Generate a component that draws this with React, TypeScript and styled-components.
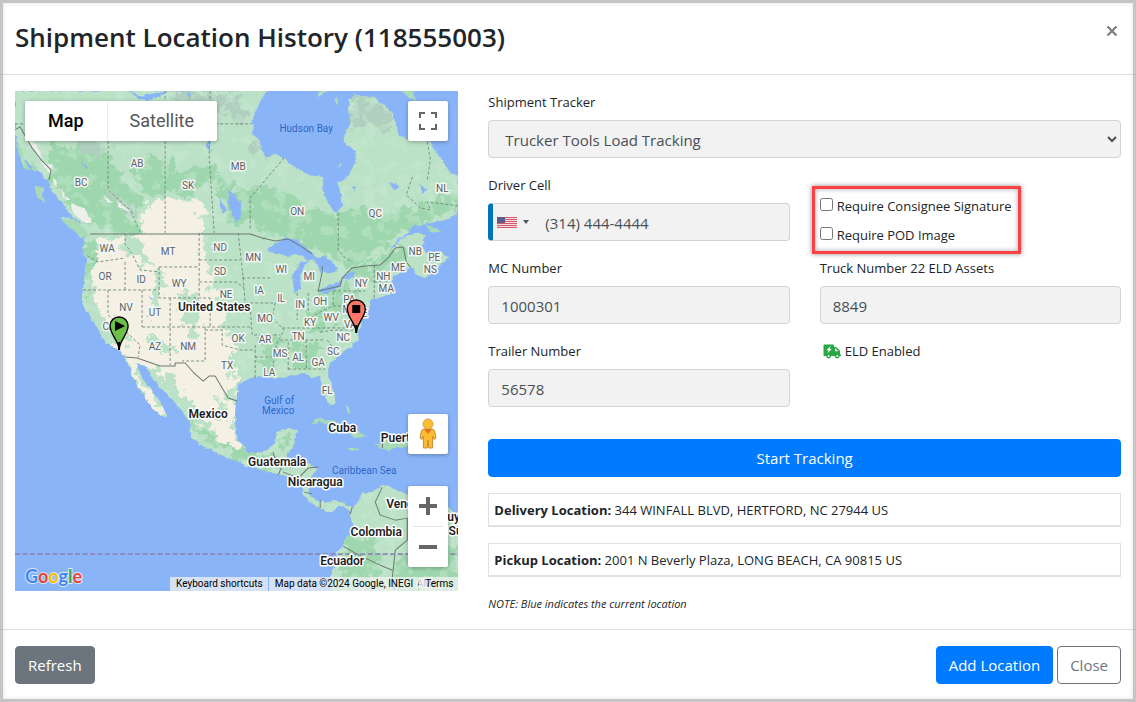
import React from "react";
import styled, { createGlobalStyle, css } from "styled-components";

const GlobalStyle = createGlobalStyle`
  *, *::before, *::after { box-sizing: border-box; }
  body {
    margin: 0;
    background: #fff;
    color: #212529;
    font-family: "Open Sans", "Noto Sans", sans-serif;
    font-size: 13px;
    line-height: 21px;
  }
  button, input, select { font-family: inherit; margin: 0; }
`;

const Dialog = styled.main`
  position: relative;
  min-height: 100vh;
  background: #fff;
  &::after {
    content: "";
    position: absolute;
    inset: 0;
    border: 3px solid rgba(140, 140, 140, 0.5);
    box-shadow: inset 0 0 5px rgba(0, 0, 0, 0.12);
    pointer-events: none;
  }
`;

const Header = styled.header`
  display: flex;
  justify-content: space-between;
  align-items: flex-start;
  padding: 16px 15px;
  border-bottom: 1px solid #dee2e6;
`;

const Title = styled.h1`
  margin: 0;
  font-size: 26px;
  line-height: 42px;
  font-weight: 600;
`;

const Dismiss = styled.button`
  display: flex;
  padding: 8px 0;
  border: 0;
  background: none;
  color: #7f7f7f;
  margin-right: 2px;
`;

const Body = styled.div`
  display: grid;
  grid-template-columns: 5fr 7fr;
  padding-top: 16px;
`;

const MapPane = styled.section`
  padding: 0 15px;
  min-width: 0;
`;

const MapFrame = styled.div`
  position: relative;
  height: 500px;
  overflow: hidden;
  background: #8ab4f8;
  font-family: Roboto, sans-serif;
`;

const MapArt = styled.svg`
  display: block;
  width: 100%;
  height: 100%;
`;

const MapLabel = styled.text<{ $kind: "state" | "country" | "water" }>`
  font-family: Roboto, sans-serif;
  text-anchor: middle;
  stroke-linejoin: round;
  paint-order: stroke;
  ${({ $kind }) =>
    $kind === "state"
      ? css`font-size: 10px; fill: #5b6065; stroke: #f3f7f3; stroke-width: 3px;`
      : $kind === "country"
        ? css`font-size: 12px; font-weight: 600; fill: #1c1d1f; stroke: #fff; stroke-width: 3px;`
        : css`font-size: 10px; fill: #2a68c8;`}
`;

const floating = css`
  border: 0;
  padding: 0;
  background: #fff;
  border-radius: 2px;
  box-shadow: 0 1px 4px rgba(0, 0, 0, 0.3);
`;

const TypeSwitch = styled.div`
  ${floating}
  position: absolute;
  top: 10px;
  left: 10px;
  display: flex;
  height: 40px;
`;

const TypeButton = styled.button<{ $active?: boolean }>`
  border: 0;
  box-shadow: ${({ $active }) => ($active ? "none" : "inset 1px 0 #ececec")};
  padding: 0 23px 2px;
  background: none;
  font-size: 18px;
  font-weight: ${({ $active }) => ($active ? 500 : 400)};
  color: ${({ $active }) => ($active ? "#000" : "#565656")};
`;

const ToolButton = styled.button<{ $top?: boolean }>`
  ${floating}
  position: absolute;
  right: 10px;
  ${({ $top }) => ($top ? "top: 10px;" : "bottom: 137px;")}
  display: grid;
  place-items: center;
  width: 40px;
  height: 40px;
`;

const ZoomStack = styled.div`
  ${floating}
  position: absolute;
  right: 10px;
  bottom: 24px;
  width: 40px;
`;

const ZoomButton = styled.button`
  display: grid;
  place-items: center;
  width: 40px;
  height: 40px;
  padding: 0;
  border: 0;
  background: none;
`;

const ZoomRule = styled.div`
  height: 1px;
  margin: 0 5px;
  background: #e6e6e6;
`;

const Logo = styled.a`
  position: absolute;
  left: 9px;
  bottom: 0;
  display: flex;
`;

const Credits = styled.div`
  position: absolute;
  right: 0;
  bottom: 0;
  display: flex;
  gap: 1px;
  font-size: 10px;
  line-height: 14px;
`;

const Credit = styled.a`
  padding: 0 5px 0 6px;
  background: rgba(245, 245, 245, 0.7);
  color: #000;
  text-decoration: none;
  white-space: nowrap;
`;

const Form = styled.form`
  display: grid;
  grid-template-columns: 1fr 1fr;
  column-gap: 30px;
  row-gap: 16px;
  align-content: start;
  padding: 0 15px;
  min-width: 0;
`;

const Field = styled.div<{ $wide?: boolean }>`
  min-width: 0;
  ${({ $wide }) => $wide && "grid-column: 1 / -1;"}
`;

const Label = styled.label`
  display: block;
  padding: 1px 0 7px;
`;

const control = css`
  width: 100%;
  height: 38px;
  border: 1px solid #ced4da;
  border-radius: 4px;
  background: #f2f2f2;
  color: #495057;
  font-size: 15px;
`;

const Input = styled.input`
  ${control}
  padding: 2px 12px 0;
`;

const Select = styled.select`
  ${control}
  padding: 2px 0 0 12px;
`;

const PhoneBox = styled.div`
  ${control}
  display: flex;
  border-left: 5px solid #0074bb;
`;

const CountryButton = styled.button`
  display: flex;
  align-items: center;
  gap: 6px;
  padding: 0 0 0 4px;
  border: 0;
  background: none;
`;

const PhoneInput = styled.input`
  flex: 1;
  min-width: 0;
  padding: 2px 12px 0 16px;
  border: 0;
  background: none;
  color: inherit;
  font-size: 15px;
`;

const Options = styled.fieldset`
  display: flex;
  flex-direction: column;
  gap: 8px;
  width: fit-content;
  height: 68px;
  margin: 12px 0 -16px -8px;
  padding: 7px 6px 7px 5px;
  border: 3px solid #fb4144;
  box-shadow: 0 0 5px rgba(0, 0, 0, 0.45), inset 0 0 5px rgba(0, 0, 0, 0.35);
`;

const Option = styled.label`
  display: flex;
  align-items: center;
  gap: 4px;
  white-space: nowrap;
  input { width: 13px; height: 13px; margin-bottom: 4px; }
`;

const Eld = styled.div`
  display: flex;
  align-items: center;
  gap: 4px;
  height: 22px;
  padding-left: 3px;
`;

const Button = styled.button<{ $tone: "primary" | "secondary" | "outline" }>`
  height: 38px;
  padding: 0 12px;
  border: 1px solid;
  border-radius: 4px;
  font-size: 15px;
  white-space: nowrap;
  ${({ $tone }) =>
    $tone === "primary"
      ? "background: #007bff; border-color: #007bff; color: #fff; font-weight: 500;"
      : $tone === "secondary"
        ? "background: #6c757d; border-color: #6c757d; color: #fff;"
        : "background: #fff; border-color: #6c757d; color: #6c757d;"}
`;

const StartButton = styled(Button)`
  grid-column: 1 / -1;
  margin-top: 16px;
`;

const Stop = styled.p`
  grid-column: 1 / -1;
  margin: 0;
  padding: 6px 5px 4px;
  border: 1px solid #dee2e6;
  border-bottom-width: 2px;
`;

const Note = styled.p`
  grid-column: 1 / -1;
  margin: 0;
  padding: 0 0 15px;
  font-size: 11px;
  font-style: italic;
`;

const Footer = styled.footer`
  display: flex;
  gap: 4px;
  padding: 16px 15px;
  border-top: 1px solid #dee2e6;
  > :first-child { margin-right: auto; }
`;

const LAND =
  "M15 91 L15 133 20 152 28 163 37 170 48 180 53 192 62 203 68 212 80 222 85 237 83 247 86 260 85 272 83 290 83 307 90 317 100 333 105 343 119 349 125 357 128 365 133 376 138 387 147 400 153 408 163 418 168 416 157 397 148 387 142 378 137 363 147 367 152 377 160 387 170 397 182 412 190 421 191 437 200 445 217 453 230 459 240 463 255 468 273 473 293 478 302 487 304 495 310 502 320 508 330 512 337 507 345 506 350 512 352 518 353 525 350 533 342 545 336 553 337 560 333 570 330 577 333 583 332 591 L458 591 458 517 448 507 430 498 408 495 393 488 382 485 372 492 362 493 358 502 352 508 345 502 333 500 325 503 313 498 308 492 310 480 317 468 307 463 290 467 287 453 292 448 297 430 288 429 277 433 273 445 263 452 247 452 238 440 235 425 235 410 237 393 238 385 250 378 263 377 280 378 290 375 302 373 312 378 318 375 322 383 325 397 330 406 335 402 334 390 328 377 328 367 337 357 350 347 358 340 359 332 362 320 367 313 370 300 378 298 390 293 388 287 393 277 403 270 412 266 416 275 425 277 437 268 448 257 440 252 430 256 422 248 425 235 415 232 402 238 394 247 390 249 400 238 413 227 430 223 445 220 458 212 L458 177 447 170 438 155 430 142 408 140 397 135 393 113 383 105 373 97 355 95 348 100 350 123 343 140 355 152 356 163 347 177 338 182 340 193 343 205 337 213 330 205 323 195 323 177 307 175 293 167 283 158 277 155 265 157 258 140 252 135 253 117 260 103 265 93 268 91Z";

const ISLANDS =
  "M60 217 L74 219 82 226 90 236 82 238 67 226Z M34 186 L42 189 45 204 37 196Z M15 143 L22 150 26 165 33 171 24 168Z M31 158 L37 172 33 171Z M310 423 L320 418 334 421 348 428 360 433 369 437 357 438 346 433 334 428 322 422Z M347 447 L354 447 359 450 349 450Z M373 446 L382 444 380 439 388 435 402 437 411 445 398 447 388 450Z M345 406 L348 409 350 414 346 411Z M425 225 L434 227 440 232 430 231Z M317 91 L328 91 318 98Z M337 97 L339 101 336 105 334 100Z M399 91 L413 91 416 101 408 96Z M340 163 L342 164 338 169Z";

const DRY =
  "M143 217 L150 207 168 199 180 203 197 205 204 215 200 233 206 242 198 255 212 275 208 290 215 300 222 315 223 335 234 345 226 362 232 385 222 395 236 412 228 425 236 440 245 448 232 446 215 430 202 418 196 405 183 392 176 380 165 372 150 364 137 357 130 370 143 388 155 405 166 416 153 408 142 393 128 364 118 345 115 330 104 315 97 300 92 280 95 262 97 248 106 238 118 243 126 256 137 258 134 245 141 235 150 233 148 224Z";

const PEAKS =
  "M184 290 L196 296 200 310 196 325 200 342 190 340 186 322 180 308Z M128 236 L140 240 146 256 156 262 150 268 138 264 130 250Z M158 268 L166 282 160 300 154 318 150 300Z M148 336 L166 344 176 352 168 354 154 346Z M112 316 L124 332 132 344 122 340Z M168 374 L180 388 194 408 204 424 214 432 200 428 186 410 174 394Z M214 392 L222 408 226 422 218 414Z";

const FOREST =
  "M48 140 L70 150 84 146 110 155 120 180 142 195 128 212 138 232 126 240 112 226 92 228 76 212 60 194 48 170Z M130 160 L160 156 180 174 210 164 224 184 200 180 190 200 176 188 150 196 136 180Z M216 185 L240 190 255 182 290 196 310 210 337 216 360 205 392 215 410 208 458 196 458 211 430 222 411 226 398 238 385 250 362 262 344 266 330 254 312 250 290 236 262 234 248 220 232 224Z M86 240 L97 244 95 270 86 285 87 306 84 300Z M318 300 L345 285 358 292 340 312 322 330 300 338 312 320Z M350 270 L382 258 400 244 406 262 388 276 370 285Z M264 335 L284 340 278 366 262 372Z M292 342 L318 345 320 365 298 370Z M170 372 L186 396 204 420 226 440 255 452 270 456 296 468 280 470 240 460 205 440 192 424Z M352 528 L368 534 380 560 372 591 338 591 342 550Z M396 560 L430 540 458 548 458 591 396 591Z M272 436 L292 434 288 450Z";

const TUNDRA =
  "M352 98 L375 101 390 110 392 128 380 130 366 124 354 128Z M70 134 L95 142 112 150 100 156 86 150Z M165 91 L215 91 238 100 248 116 240 126 225 112 200 106 176 102Z M252 138 L263 150 266 158 250 148Z M108 190 L122 200 136 214 132 218 118 206Z";

const LAKES =
  "M267 250 L276 243 287 238 297 240 308 249 318 259 307 260 296 254 286 256Z M300 262 L309 260 303 268 300 280 301 290 294 292 292 278Z M310 256 L323 257 333 262 337 270 327 275 322 268 320 275 316 264Z M317 292 L328 285 342 281 340 286 327 293Z M342 276 L355 272 353 278 342 280Z M228 190 L234 194 241 204 240 220 235 222 229 207Z M219 196 L226 210 224 214 219 205Z M130 91 L140 96 170 91 158 97 147 101 138 98Z M148 294 L153 299 150 299Z M79 158 L88 169 86 169Z M204 146 L210 140 211 152Z M388 182 L399 186 394 189Z M420 185 L428 190 422 193Z M350 188 L357 186 354 191Z M187 92 L192 96 188 98Z";

const SNOW =
  "M24 135 L33 142 40 150 42 162 34 152Z M52 178 L58 182 56 188Z M60 188 L70 200 66 200Z M70 204 L84 208 92 222 84 222 74 214Z M104 195 L112 202 108 203Z M116 200 L130 212 120 208Z M40 161 L52 166 50 174Z";

const BORDERS_DASHED =
  "M15 124 H252 M108 141 V190 L130 210 140 232 M165 91 V233 M210 91 L209 155 214 233 M284 158 L250 198 V230 M338 213 V250 L345 258 352 262 M199 233 V298 M159 267 H199 M159 267 V298 H210 M238 233 L241 260 243 278 245 303 M199 260 H240 M199 282 H236 L244 288 M125 233 V244 L132 254 140 270 159 272 M125 262 V290 M83 290 H159 M87 256 L98 262 125 258 M108 290 V315 L140 345 138 357 M142 290 V327 M170 298 V365 M142 327 H252 M205 327 V361 H182 M210 298 V327 M242 278 H270 M245 303 H275 M250 307 L252 335 H280 M288 342 V372 M306 340 V368 M288 369 H325 M282 328 H345 M280 340 H325 M297 293 V320 M308 293 V312 M333 292 V306 M333 291 H365 M333 306 H367 M320 332 L335 330 H358 M255 345 V378 M255 357 H272 M205 330 H222 V345 L240 350 H255 M275 303 L272 318 284 330 276 345 272 372 M306 320 L320 312 333 306 M327 340 L338 355 M374 265 V298 M374 282 H388 M412 177 L406 195 420 208 430 210 427 202 458 206 M427 142 L430 160 427 180";

const BORDERS_SOLID =
  "M90 234 H250 L262 238 275 241 288 239 300 246 312 254 M322 266 L322 272 318 291 340 286 342 278 352 268 365 266 380 265 388 258 395 248 403 247 406 262 410 267 M125 357 L137 358 160 366 H175 V363 H185 L193 372 203 381 209 376 H215 L222 388 228 398 237 401 M15 130 L20 127 32 148 42 161 51 170 49 180 M382 487 L375 502 380 515 395 520 407 518 V540 L395 550 392 578 394 591 M343 546 L355 553 365 558 380 565 392 570 M273 452 L275 460 283 463 278 475 M283 472 L298 478 308 468 318 467 M320 500 V508 M304 492 L312 494 M352 507 L350 514 M383 437 L382 448";

const STATES: [string, number, number][] = [
  ["AB", 137, 163], ["BC", 81, 182], ["SK", 188, 185], ["MB", 238, 166], ["ON", 297, 211],
  ["QC", 375, 213], ["NL", 442, 188], ["WA", 107, 248], ["MT", 168, 251], ["ND", 220, 247],
  ["MN", 253, 257], ["NB", 415, 251], ["PE", 434, 257], ["NS", 430, 269], ["OR", 105, 276],
  ["ID", 141, 279], ["WY", 179, 283], ["SD", 220, 271], ["NE", 226, 294], ["NV", 126, 307],
  ["UT", 155, 312], ["CA", 109, 326], ["AZ", 155, 346], ["NM", 188, 346], ["OK", 238, 338],
  ["TX", 227, 365], ["WI", 281, 269], ["MI", 309, 276], ["IA", 259, 290], ["IL", 281, 298],
  ["IN", 300, 304], ["OH", 320, 301], ["NY", 361, 283], ["NH", 383, 276], ["ME", 398, 267],
  ["MA", 386, 288], ["PA", 349, 299], ["MD", 350, 309], ["DE", 361, 313], ["MO", 265, 318],
  ["KY", 310, 322], ["WV", 331, 317], ["VA", 350, 324], ["AR", 265, 339], ["TN", 298, 336],
  ["NC", 343, 337], ["MS", 280, 353], ["AL", 298, 357], ["SC", 333, 351], ["GA", 318, 362],
  ["LA", 269, 372], ["FL", 327, 390], ["AM", 424, 583],
];

const COUNTRIES: [string, number, number][] = [
  ["United States", 214, 307], ["Mexico", 208, 414], ["Cuba", 342, 428], ["Puerto Rico", 412, 438],
  ["Guatemala", 277, 462], ["Nicaragua", 315, 482], ["Venezuela", 414, 504], ["Colombia", 376, 532],
  ["Ecuador", 342, 561], ["Guyana", 459, 517], ["Suriname", 474, 531],
];

const WATERS: [string, number, number][] = [
  ["Hudson Bay", 306, 128], ["Gulf of", 279, 400], ["Mexico", 278, 410], ["Caribbean Sea", 364, 470],
];

function Pin({ x, y, fill, children }: { x: number; y: number; fill: string; children: React.ReactNode }) {
  return (
    <g transform={`translate(${x} ${y})`}>
      <path
        d="M0 -1 C-1 -10 -9 -16 -9 -24 A9 9 0 0 1 9 -24 C9 -16 1 -10 0 -1Z"
        fill={fill}
        stroke="#000"
        strokeWidth="1.4"
      />
      <path d="M0 0 V-8" stroke="#000" strokeWidth="2" />
      {children}
    </g>
  );
}

function ContinentMap() {
  return (
    <MapArt viewBox="15 91 443 500" preserveAspectRatio="xMidYMid slice" role="img" aria-label="Map of North America">
      <defs>
        <clipPath id="land"><path d={LAND} /><path d={ISLANDS} /></clipPath>
        <filter id="rough" x="0" y="0" width="100%" height="100%">
          <feTurbulence type="fractalNoise" baseFrequency="0.14" numOctaves="3" seed="4" result="n" />
          <feDisplacementMap in="SourceGraphic" in2="n" scale="5" xChannelSelector="R" yChannelSelector="G" />
        </filter>
        <filter id="patchy" x="0" y="0" width="100%" height="100%">
          <feTurbulence type="fractalNoise" baseFrequency="0.09" numOctaves="4" seed="11" result="n" />
          <feDisplacementMap in="SourceGraphic" in2="n" scale="26" xChannelSelector="R" yChannelSelector="G" />
        </filter>
        <filter id="speckle" x="0" y="0" width="100%" height="100%">
          <feTurbulence type="fractalNoise" baseFrequency="0.08" numOctaves="4" seed="7" />
          <feColorMatrix values="0 0 0 0 0.58  0 0 0 0 0.83  0 0 0 0 0.66  14 0 0 0 -7.7" />
        </filter>
      </defs>
      <g filter="url(#rough)">
        <path d={LAND} fill="#bbe2c6" />
        <path d={ISLANDS} fill="#a8dab5" />
        <g clipPath="url(#land)">
          <path d={FOREST} fill="#94d2a5" opacity="0.75" filter="url(#patchy)" />
          <path d={TUNDRA} fill="#b1cfbe" filter="url(#patchy)" />
          <rect x="15" y="91" width="443" height="500" filter="url(#speckle)" opacity="0.4" />
          <path d={DRY} fill="#f5f0e4" stroke="#f5f0e4" strokeWidth="5" filter="url(#patchy)" />
          <path d={PEAKS} fill="#bbe2c6" filter="url(#patchy)" />
        </g>
        <path d={SNOW} fill="#eef0ee" />
        <path d={LAKES} fill="#8ab4f8" />
      </g>
      <path d={BORDERS_DASHED} fill="none" stroke="#6f8a7b" strokeWidth="0.9" strokeDasharray="3 2" />
      <path d={BORDERS_SOLID} fill="none" stroke="#6c7a72" strokeWidth="1" strokeLinejoin="round" />
      <path d="M15 554 H458" stroke="#8c87b4" strokeWidth="1.6" strokeDasharray="5 2.5" />
      {STATES.map(([t, x, y]) => (
        <MapLabel key={t} $kind="state" x={x} y={y + 4}>{t}</MapLabel>
      ))}
      {WATERS.map(([t, x, y]) => (
        <MapLabel key={t + y} $kind="water" x={x} y={y + 4}>{t}</MapLabel>
      ))}
      {COUNTRIES.map(([t, x, y]) => (
        <MapLabel key={t} $kind="country" x={x} y={y + 4}>{t}</MapLabel>
      ))}
      <Pin x={119} y={350} fill="#6cc04a"><path d="M-4 -29 L6 -24 L-4 -19Z" fill="#000" /></Pin>
      <Pin x={356} y={333} fill="#fd7567"><rect x="-4" y="-28" width="8" height="8" fill="#000" /></Pin>
    </MapArt>
  );
}

const LOGO_LETTERS: [string, string][] = [
  ["G", "#4285f4"], ["o", "#ea4335"], ["o", "#fbbc04"], ["g", "#4285f4"], ["l", "#34a853"], ["e", "#ea4335"],
];

function Flag() {
  return (
    <svg width="20" height="11" viewBox="0 0 20 11" opacity="0.75">
      <rect width="20" height="11" fill="#f3d5da" />
      {[0, 2, 4, 6, 8, 10].map((y) => <rect key={y} y={y} width="20" height="1" fill="#c8283f" />)}
      <rect width="8" height="6" fill="#2d2c66" />
    </svg>
  );
}

function EldTruck() {
  return (
    <svg width="18" height="15" viewBox="0 0 18 15">
      <path
        d="M1.5 0.5 H10 A1 1 0 0 1 11 1.5 V3 H13.2 L17 6.8 V10.6 H18 V12 H16.6 A2.4 2.4 0 0 1 11.8 12 H8 A2.4 2.4 0 0 1 3.2 12 H1.5 A1 1 0 0 1 0.5 11 V1.5 A1 1 0 0 1 1.5 0.5Z"
        fill="#28a745"
      />
      <path d="M12 4.5 H12.8 L15.4 7.2 H12Z" fill="#fff" />
      <path d="M7.6 2 L3.4 6.2 H5.6 L4.4 9.2 L8.8 5 H6.6Z" fill="#fff" />
      <circle cx="5.6" cy="12" r="1.9" fill="#28a745" /><circle cx="5.6" cy="12" r="1" fill="#fff" />
      <circle cx="14.2" cy="12" r="1.9" fill="#28a745" /><circle cx="14.2" cy="12" r="1" fill="#fff" />
    </svg>
  );
}

export default function App() {
  return (
    <>
      <GlobalStyle />
      <Dialog>
        <Header>
          <Title>Shipment Location History (118555003)</Title>
          <Dismiss aria-label="Close dialog">
            <svg width="14" height="14" viewBox="0 0 14 14">
              <path d="M2.5 2.5 L11.5 11.5 M11.5 2.5 L2.5 11.5" stroke="currentColor" strokeWidth="2.2" />
            </svg>
          </Dismiss>
        </Header>
        <Body>
          <MapPane>
            <MapFrame>
              <ContinentMap />
              <TypeSwitch>
                <TypeButton $active>Map</TypeButton>
                <TypeButton>Satellite</TypeButton>
              </TypeSwitch>
              <ToolButton $top aria-label="Toggle fullscreen">
                <svg width="18" height="18" viewBox="0 0 18 18" fill="#666">
                  <path d="M0 0 H6 V2 H2 V6 H0Z M12 0 H18 V6 H16 V2 H12Z M0 12 H2 V16 H6 V18 H0Z M16 12 H18 V18 H12 V16 H16Z" />
                </svg>
              </ToolButton>
              <ToolButton aria-label="Street View">
                <svg width="20" height="32" viewBox="0 0 20 32">
                  <path
                    d="M6 11 H14 Q16 11 16.5 13 L18 20 L16 21.5 L14.6 18 V30 H10.8 L10 22 L9.2 30 H5.4 V18 L4 21.5 L2 20 L3.5 13 Q4 11 6 11Z"
                    fill="#fbbc2e"
                    stroke="#c98d3c"
                    strokeWidth="1"
                  />
                  <path d="M6 11 H14 L10 16Z" fill="#e8711c" />
                  <circle cx="10" cy="6" r="5" fill="#fbbc2e" stroke="#c9953f" strokeWidth="0.8" />
                </svg>
              </ToolButton>
              <ZoomStack>
                <ZoomButton aria-label="Zoom in">
                  <svg width="18" height="18"><path d="M7 0 H11 V7 H18 V11 H11 V18 H7 V11 H0 V7 H7Z" fill="#666" /></svg>
                </ZoomButton>
                <ZoomRule />
                <ZoomButton aria-label="Zoom out">
                  <svg width="18" height="18"><path d="M0 7 H18 V11 H0Z" fill="#666" /></svg>
                </ZoomButton>
              </ZoomStack>
              <Logo href="#google" aria-label="Google">
                <svg width="62" height="28" viewBox="0 0 62 28">
                  <text
                    x="1" y="20" fontFamily="Lato, sans-serif" fontSize="18" fontWeight="700"
                    stroke="#dbe7fb" strokeWidth="2" paintOrder="stroke"
                  >
                    {LOGO_LETTERS.map(([c, fill], i) => <tspan key={i} fill={fill}>{c}</tspan>)}
                  </text>
                </svg>
              </Logo>
              <Credits>
                <Credit href="#shortcuts">Keyboard shortcuts</Credit>
                <Credit as="span">Map data ©2024 Google, INEGI</Credit>
                <Credit href="#terms">Terms</Credit>
              </Credits>
            </MapFrame>
          </MapPane>
          <Form onSubmit={(e) => e.preventDefault()}>
            <Field $wide>
              <Label htmlFor="tracker">Shipment Tracker</Label>
              <Select id="tracker"><option>Trucker Tools Load Tracking</option></Select>
            </Field>
            <Field>
              <Label htmlFor="cell">Driver Cell</Label>
              <PhoneBox>
                <CountryButton type="button" aria-label="United States">
                  <Flag />
                  <svg width="6" height="4"><path d="M0 0 H6 L3 4Z" fill="#555" /></svg>
                </CountryButton>
                <PhoneInput id="cell" type="tel" defaultValue="(314) 444-4444" />
              </PhoneBox>
            </Field>
            <Options aria-label="Requirements">
              <Option><input type="checkbox" />Require Consignee Signature</Option>
              <Option><input type="checkbox" />Require POD Image</Option>
            </Options>
            <Field>
              <Label htmlFor="mc">MC Number</Label>
              <Input id="mc" defaultValue="1000301" />
            </Field>
            <Field>
              <Label htmlFor="truck">Truck Number 22 ELD Assets</Label>
              <Input id="truck" defaultValue="8849" />
            </Field>
            <Field>
              <Label htmlFor="trailer">Trailer Number</Label>
              <Input id="trailer" defaultValue="56578" />
            </Field>
            <Eld><EldTruck />ELD Enabled</Eld>
            <StartButton type="button" $tone="primary">Start Tracking</StartButton>
            <Stop><strong>Delivery Location:</strong> 344 WINFALL BLVD, HERTFORD, NC 27944 US</Stop>
            <Stop><strong>Pickup Location:</strong> 2001 N Beverly Plaza, LONG BEACH, CA 90815 US</Stop>
            <Note>NOTE: Blue indicates the current location</Note>
          </Form>
        </Body>
        <Footer>
          <Button $tone="secondary">Refresh</Button>
          <Button $tone="primary">Add Location</Button>
          <Button $tone="outline">Close</Button>
        </Footer>
      </Dialog>
    </>
  );
}
